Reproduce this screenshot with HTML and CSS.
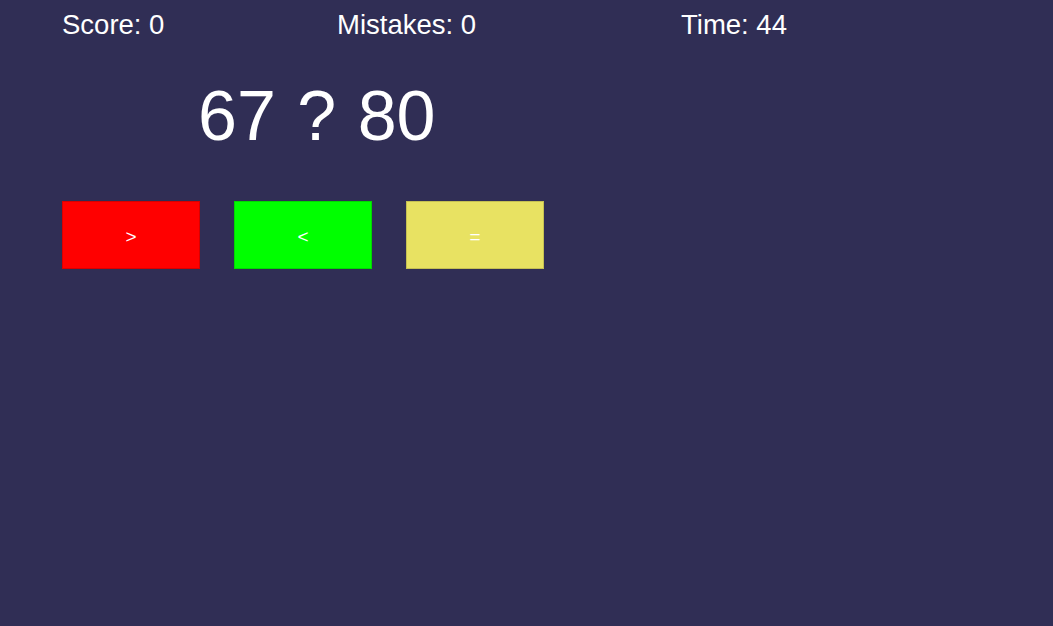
FILE: index.html
```html
<!DOCTYPE html>
<html>
<head>
<meta charset="utf-8">
<link rel="stylesheet" href="styles.css">
</head>
<body>
<div class="game">
  <div class="stats">
    <span class="stat">Score: 0</span>
    <span class="stat">Mistakes: 0</span>
    <span class="stat">Time: 44</span>
  </div>
  <div class="question">67 ? 80</div>
  <div class="buttons">
    <button class="btn red">&gt;</button>
    <button class="btn green">&lt;</button>
    <button class="btn yellow">=</button>
  </div>
</div>
</body>
</html>
```
FILE: styles.css
```css
html, body {
  margin: 0;
  height: 100%;
  background: #302e55;
  font-family: "Liberation Sans", Arial, sans-serif;
  color: #fff;
}
.game {
  padding: 8px 0 0 62px;
}
.stats {
  display: grid;
  grid-template-columns: 275px 344px auto;
  font-size: 27.5px;
  line-height: 34px;
}
.question {
  margin: 39px 0 0 136px;
  font-size: 70px;
  line-height: 70px;
  word-spacing: 2px;
}
.buttons {
  display: flex;
  gap: 34px;
  margin-top: 50px;
}
.btn {
  width: 138px;
  height: 68px;
  border: 1px solid rgba(0, 0, 0, 0.15);
  padding: 3px 0 0;
  color: #fff;
  font-family: "Liberation Sans", Arial, sans-serif;
  font-size: 19px;
}
.red { background: #ff0000; }
.green { background: #00ff00; }
.yellow { background: #e8e262; }
```
